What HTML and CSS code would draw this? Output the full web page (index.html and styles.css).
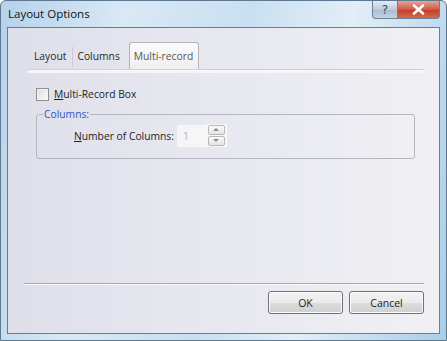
FILE: index.html
```html
<!DOCTYPE html>
<html lang="en">

<head>
    <meta charset="UTF-8">
    <title>Layout Options</title>
    <link rel="stylesheet" href="styles.css">
</head>

<body>
    <div class="window">
        <div class="titlebar">
            <span class="title">Layout Options</span>
            <div class="caption-btns">
                <span class="cap-btn help-btn">?</span>
                <span class="cap-btn close-btn">
                    <svg width="13" height="11" viewBox="0 0 13 11">
                        <path d="M2 1.5 L11 9.5 M11 1.5 L2 9.5" stroke="#fff" stroke-width="2.6" stroke-linecap="round" fill="none" />
                    </svg>
                </span>
            </div>
        </div>
        <div class="client">
            <div class="tabs">
                <span class="tab">Layout</span>
                <span class="tab-sep"></span>
                <span class="tab">Columns</span>
                <span class="tab selected">Multi-record</span>
            </div>
            <div class="panel">
                <label class="check-row">
                    <span class="checkbox"></span>
                    <span><u>M</u>ulti-Record Box</span>
                </label>
                <fieldset class="group">
                    <legend>Columns:</legend>
                    <div class="field-row">
                        <span class="field-label"><u>N</u>umber of Columns:</span>
                        <span class="spin-input">1</span>
                        <span class="spinner">
                            <span class="spin-btn up"></span>
                            <span class="spin-btn down"></span>
                        </span>
                    </div>
                </fieldset>
            </div>
            <div class="footer">
                <div class="separator"></div>
                <div class="buttons">
                    <button class="btn">OK</button>
                    <button class="btn">Cancel</button>
                </div>
            </div>
        </div>
    </div>
</body>

</html>
```

FILE: styles.css
```css
body {
    margin: 0;
    font-family: "Open Sans", "Noto Sans", sans-serif;
    font-size: 10.3px;
    color: #1e1e1e;
}

.window {
    width: 447px;
    height: 341px;
    box-sizing: border-box;
    display: flex;
    flex-direction: column;
    background: linear-gradient(100deg, #b4d2ea 0%, #d9e8f5 25%, #c9dff1 50%, #e2eef8 70%, #aacde8 100%);
    border: 1px solid #5d7891;
    border-radius: 6px 6px 0 0;
}

.titlebar {
    height: 26px;
    display: flex;
    justify-content: space-between;
    align-items: flex-start;
}

.title {
    font-size: 11.5px;
    margin: 5px 0 0 7px;
    color: #111;
}

.caption-btns {
    display: flex;
    margin-right: 6px;
}

.cap-btn {
    height: 17px;
    display: flex;
    align-items: center;
    justify-content: center;
    border: 1px solid #6b7e94;
    border-top: none;
}

.help-btn {
    width: 24px;
    border-radius: 0 0 0 4px;
    background: linear-gradient(#e3ecf5, #bccbdb 50%, #a9bccf 51%, #c3d3e3);
    color: #3a4c60;
    font-family: "DejaVu Sans", sans-serif;
    font-size: 12px;
}

.close-btn {
    width: 41px;
    border-left: none;
    border-radius: 0 0 4px 0;
    background: linear-gradient(#e8a593, #cf5a45 50%, #c13a24 51%, #d66a4c);
}

.client {
    flex: 1;
    margin: 0 6px 6px 6px;
    border: 1px solid #6f7b89;
    background: linear-gradient(to right, #dedfe9, #e9eaf1 60%, #f0f0f4);
    display: flex;
    flex-direction: column;
}

.tabs {
    display: flex;
    align-items: flex-end;
    margin: 15px 0 0 22px;
    height: 27px;
}

.tab {
    padding: 0 6px 4px 4px;
    line-height: 20px;
    color: #2a2a2a;
}

.tab-sep {
    width: 1px;
    height: 20px;
    margin-bottom: 3px;
    background: #c9cad2;
}

.tab.selected {
    margin-left: 3px;
    padding: 3px 5px 4px 4px;
    background: linear-gradient(#fbfbfc, #eeeef2);
    border: 1px solid #b2b4bc;
    border-bottom: none;
    border-radius: 3px 3px 0 0;
    color: #555;
}

.panel {
    margin: 0 14px 0 19px;
    border-top: 3px solid #f6f6f8;
    box-shadow: 0 -1px 0 #cfd0d6;
    border-radius: 2px 2px 0 0;
    padding: 14px 10px 0 9px;
}

.check-row {
    display: flex;
    align-items: center;
    gap: 5px;
}

.checkbox {
    width: 11px;
    height: 11px;
    border: 1px solid #8e8f8f;
    background: linear-gradient(135deg, #dcdcdc, #fbfbfb);
    box-shadow: inset 0 0 0 1px #f4f4f4;
}

.group {
    margin: 6px 0 0 0;
    padding: 3px 0 11px 4px;
    border: 1px solid #b5b7bf;
    border-radius: 3px;
}

.group legend {
    padding: 0 1px;
    margin-left: 2px;
    color: #2f55c8;
}

.field-row {
    display: flex;
    align-items: center;
    margin-left: 33px;
}

.field-label {
    margin-right: 3px;
}

.spin-input {
    width: 23px;
    height: 22px;
    padding-left: 6px;
    line-height: 22px;
    background: #f6f6f6;
    color: #b0b0b0;
}

.spinner {
    display: flex;
    flex-direction: column;
    gap: 1px;
    padding: 1px 2px;
    background: #f6f6f6;
}

.spin-btn {
    width: 15px;
    height: 8px;
    border: 1px solid #b8b8b8;
    border-radius: 2px;
    background: linear-gradient(#fafafa, #e4e4e4);
    position: relative;
}

.spin-btn::after {
    content: "";
    position: absolute;
    left: 4px;
    top: 2px;
    border-left: 3px solid transparent;
    border-right: 3px solid transparent;
}

.spin-btn.up::after {
    border-bottom: 3px solid #8a8a8a;
}

.spin-btn.down::after {
    border-top: 3px solid #8a8a8a;
}

.footer {
    margin-top: auto;
    padding: 0 15px 19px 16px;
}

.separator {
    border-top: 1px solid #a7a9b2;
    border-bottom: 1px solid #f8f8fa;
}

.buttons {
    display: flex;
    justify-content: flex-end;
    gap: 6px;
    margin-top: 6px;
}

.btn {
    width: 75px;
    height: 23px;
    font-family: inherit;
    font-size: 10.5px;
    color: #1e1e1e;
    border: 1px solid #707070;
    border-radius: 3px;
    background: linear-gradient(#f2f2f2, #ebebeb 50%, #dddddd 51%, #cfcfcf);
    box-shadow: inset 0 0 0 1px #fbfbfb;
}
```
